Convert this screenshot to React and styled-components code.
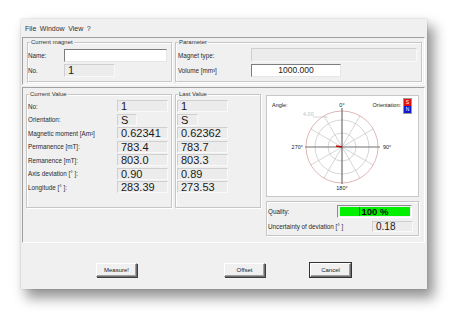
import React from 'react';
import styled, { createGlobalStyle } from 'styled-components';

const GlobalStyle = createGlobalStyle`
  * { box-sizing: border-box; }
  body {
    margin: 0;
    background: #fff;
    font-family: "Liberation Sans", Arial, sans-serif;
    color: #1a1a1a;
  }
`;

const Page = styled.div`
  width: 469px;
  height: 332px;
  padding: 19px 0 0 21px;
`;

const Window = styled.div`
  width: 406px;
  height: 270px;
  background: #f0f0f0;
  display: flex;
  flex-direction: column;
  box-shadow: 0 0 2px rgba(0, 0, 0, 0.18), 6px 8px 12px 1px rgba(0, 0, 0, 0.42);
`;

const MenuBar = styled.div`
  height: 18px;
  display: flex;
  align-items: center;
  gap: 3.5px;
  padding: 1px 0 0 4px;
  font-size: 7px;
  color: #333;
`;

// sunken panel (top parameters, middle values)
const Frame = styled.div`
  margin: ${p => p.$top || 0}px 2px 0 1px;
  height: ${p => p.$h}px;
  border: 1px solid;
  border-color: #a0a0a0 #fff #fff #a0a0a0;
  display: flex;
  gap: 3px;
  padding: ${p => p.$pad};
`;

const GroupBox = styled.div`
  border: 1px solid #c6c6c6;
  box-shadow: inset 1px 1px 0 #fff, 1px 1px 0 #fff;
  width: ${p => (p.$w ? `${p.$w}px` : 'auto')};
  flex: ${p => (p.$w ? 'none' : 1)};
  height: ${p => p.$h}px;
  display: flex;
  flex-direction: column;
`;

const Caption = styled.div`
  align-self: flex-start;
  margin: -4px 0 0 2px;
  padding: 0 1px;
  background: #f0f0f0;
  font-size: 6px;
  line-height: 7px;
  color: #333;
`;

const Rows = styled.div`
  display: flex;
  flex-direction: column;
  gap: ${p => p.$gap}px;
  margin-top: ${p => p.$mt}px;
  padding-left: ${p => p.$pl}px;
`;

const Row = styled.div`
  display: flex;
  align-items: center;
  height: ${p => p.$h || 13}px;
`;

const Label = styled.span`
  width: ${p => p.$w}px;
  flex: none;
  font-size: 6.3px;
  line-height: 7px;
  white-space: nowrap;
  color: #2a2a2a;
`;

const Input = styled.div`
  width: ${p => p.$w}px;
  height: 100%;
  background: #fff;
  border: 1px solid;
  border-color: #7d7d7d #e6e6e6 #e6e6e6 #7d7d7d;
  font-size: 8.5px;
  line-height: 11px;
  text-align: center;
`;

const Field = styled.div`
  width: ${p => p.$w}px;
  height: 100%;
  background: #ececec;
  border: 1px solid;
  border-color: #cfcfcf #f9f9f9 #f9f9f9 #cfcfcf;
  padding-left: 3px;
  font-size: ${p => p.$fs || 11}px;
  line-height: ${p => p.$lh || 11}px;
  white-space: nowrap;
`;

const ValueGrid = styled.div`
  display: grid;
  grid-template-columns: ${p => p.$cols};
  grid-auto-rows: 12px;
  row-gap: 1.5px;
  margin-top: 2px;
  padding-left: 1px;
  align-items: center;
`;

const RightColumn = styled.div`
  width: 153px;
  margin-left: 2px;
  display: flex;
  flex-direction: column;
  gap: 4px;
  padding-top: 1px;
`;

const PolarBox = styled.div`
  height: 102px;
  background: #fff;
  border: 1px solid #c8c8c8;
  display: flex;
  flex-direction: column;
`;

const PolarHeader = styled.div`
  display: flex;
  justify-content: space-between;
  align-items: flex-start;
  padding: 2px 6px 0 5px;
  height: 16px;
  font-size: 5.5px;
`;

const HeaderText = styled.span`
  margin-top: ${p => p.$mt}px;
  display: inline-block;
`;

const OrientationWrap = styled.div`
  display: flex;
  align-items: flex-start;
  gap: 2px;
`;

const Badge = styled.div`
  display: flex;
  flex-direction: column;
  width: 9px;
  border: 1px solid #9a9a9a;
`;

const Pole = styled.span`
  height: 7px;
  background: ${p => p.$c};
  color: #fff;
  font-size: 5px;
  line-height: 7px;
  text-align: center;
`;

const ChartSvg = styled.svg`
  display: block;
  margin-top: -10px;
`;

const QualityBox = styled.div`
  height: 35px;
  border: 1px solid #c6c6c6;
  box-shadow: inset 1px 1px 0 #fff, 1px 1px 0 #fff;
  display: flex;
  flex-direction: column;
  gap: 3px;
  padding: 3px 0 0 1px;
`;

const Bar = styled.div`
  width: 75px;
  height: 100%;
  border: 1px solid;
  border-color: #8c8c8c #fff #fff #8c8c8c;
  padding: 1px 1px 1px 2px;
`;

const BarFill = styled.div`
  width: ${p => p.$pct}%;
  height: 100%;
  background: linear-gradient(to right, #00f000 0 19px, #2e5e2e 19px 20px, #00f000 20px);
  font-size: 9.5px;
  font-weight: bold;
  line-height: 10px;
  text-align: center;
  color: #101010;
`;

const ButtonBar = styled.div`
  display: flex;
  padding: 20px 0 0 75px;
`;

const Button = styled.button`
  width: 41px;
  height: 14px;
  margin-left: ${p => p.$gap || 0}px;
  padding: 0;
  font-family: inherit;
  font-size: 6px;
  color: #222;
  background: #f0f0f0;
  border: 1px solid;
  border-color: #fff #6d6d6d #6d6d6d #fff;
  box-shadow: ${p => (p.$default
    ? '0 0 0 1px #333, inset -1px -1px 0 #a0a0a0'
    : 'inset -1px -1px 0 #a0a0a0, 1px 1px 0 #404040')};
`;

const currentRows = [
  ['No:', '1'],
  ['Orientation:', 'S'],
  ['Magnetic moment [Am²]', '0.62341'],
  ['Permanence [mT]:', '783.4'],
  ['Remanence [mT]:', '803.0'],
  ['Axis deviation [° ]:', '0.90'],
  ['Longitude [° ]:', '283.39'],
];

const lastValues = ['1', 'S', '0.62362', '783.7', '803.3', '0.89', '273.53'];

function PolarChart() {
  const cx = 75;
  const cy = 45;
  const spokes = [30, 60, 120, 150, 210, 240, 300, 330];
  return (
    <ChartSvg width="151" height="90" viewBox="0 0 151 90">
      {[14, 27].map(r => (
        <circle key={r} cx={cx} cy={cy} r={r} fill="none" stroke="#c4c4c4" strokeWidth="0.7" />
      ))}
      {spokes.map(a => {
        const rad = (a * Math.PI) / 180;
        return (
          <line key={a} x1={cx} y1={cy} x2={cx + 36 * Math.sin(rad)} y2={cy - 36 * Math.cos(rad)}
            stroke="#c4c4c4" strokeWidth="0.7" />
        );
      })}
      <circle cx={cx} cy={cy} r="36" fill="none" stroke="#d8a3a3" strokeWidth="0.8" />
      <line x1={cx} y1={cy - 39} x2={cx} y2={cy + 37} stroke="#707070" strokeWidth="1.2" />
      <line x1={cx - 37} y1={cy} x2={cx + 38} y2={cy} stroke="#707070" strokeWidth="1.2" />
      <line x1={46} y1={15} x2={61} y2={15} stroke="#c8c8c8" strokeWidth="0.7" />
      <line x1={cx} y1={cy} x2={cx - 6} y2={cy - 1} stroke="#c00000" strokeWidth="1.6" />
      <g fontFamily="Liberation Sans, Arial, sans-serif" fontSize="5.5" fill="#222">
        <text x={cx} y="5" textAnchor="middle">0°</text>
        <text x={cx} y="88" textAnchor="middle">180°</text>
        <text x="116" y="47">90°</text>
        <text x="36" y="47" textAnchor="end">270°</text>
        <text x="36" y="14" fill="#bdbdbd">4.00</text>
      </g>
    </ChartSvg>
  );
}

export default function App() {
  return (
    <Page>
      <GlobalStyle />
      <Window>
        <MenuBar>
          <span>File</span>
          <span>Window</span>
          <span>View</span>
          <span>?</span>
        </MenuBar>

        <Frame $h={48} $pad="4px 2px 0 4px">
          <GroupBox $w={145} $h={40}>
            <Caption>Current magnet</Caption>
            <Rows $gap={2} $mt={3} $pl={0}>
              <Row>
                <Label $w={36}>Name:</Label>
                <Input $w={103} />
              </Row>
              <Row>
                <Label $w={36}>No.</Label>
                <Field $w={51}>1</Field>
              </Row>
            </Rows>
          </GroupBox>
          <GroupBox $h={40}>
            <Caption>Parameter</Caption>
            <Rows $gap={2} $mt={2} $pl={2}>
              <Row $h={14}>
                <Label $w={73}>Magnet type:</Label>
                <Field $w={166} />
              </Row>
              <Row>
                <Label $w={73}>Volume [mm³]</Label>
                <Input $w={90}>1000.000</Input>
              </Row>
            </Rows>
          </GroupBox>
        </Frame>

        <Frame $top={2} $h={156} $pad="6px 5px 0 3px">
          <GroupBox $w={146} $h={114}>
            <Caption>Current Value</Caption>
            <ValueGrid $cols="89px 51px">
              {currentRows.map(([label, value], i) => (
                <React.Fragment key={label}>
                  <Label>{label}</Label>
                  <Field $w={i === 1 ? 20 : 51} $lh={10}>{value}</Field>
                </React.Fragment>
              ))}
            </ValueGrid>
          </GroupBox>
          <GroupBox $w={86} $h={114}>
            <Caption>Last Value</Caption>
            <ValueGrid $cols="51px">
              {lastValues.map((value, i) => (
                <Field key={i} $w={i === 1 ? 21 : 51} $lh={10}>{value}</Field>
              ))}
            </ValueGrid>
          </GroupBox>
          <RightColumn>
            <PolarBox>
              <PolarHeader>
                <HeaderText $mt={4}>Angle:</HeaderText>
                <OrientationWrap>
                  <HeaderText $mt={4}>Orientation:</HeaderText>
                  <Badge>
                    <Pole $c="#e41010">S</Pole>
                    <Pole $c="#1018d0">N</Pole>
                  </Badge>
                </OrientationWrap>
              </PolarHeader>
              <PolarChart />
            </PolarBox>
            <QualityBox>
              <Row>
                <Label $w={69}>Quality:</Label>
                <Bar>
                  <BarFill $pct={100}>100 %</BarFill>
                </Bar>
              </Row>
              <Row $h={11}>
                <Label $w={104}>Uncertainty of deviation [° ]</Label>
                <Field $w={41} $fs={10} $lh={9}>0.18</Field>
              </Row>
            </QualityBox>
          </RightColumn>
        </Frame>

        <ButtonBar>
          <Button>Measure!</Button>
          <Button $gap={87}>Offset</Button>
          <Button $gap={45} $default>Cancel</Button>
        </ButtonBar>
      </Window>
    </Page>
  );
}
